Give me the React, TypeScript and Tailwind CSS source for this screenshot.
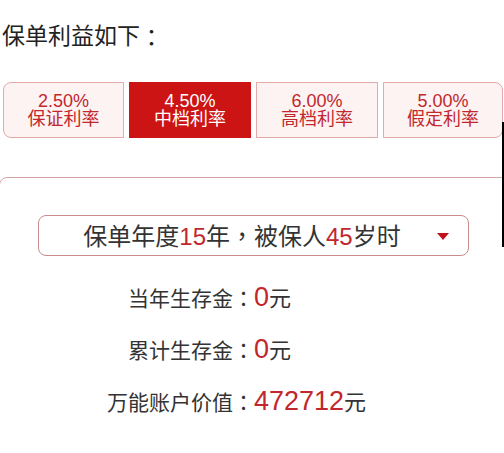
import React from "react";

const tabs = [
  { rate: "2.50%", label: "保证利率", active: false, w: "w-[121px]", round: "rounded-l-[8px]" },
  { rate: "4.50%", label: "中档利率", active: true, w: "w-[122px]", round: "" },
  { rate: "6.00%", label: "高档利率", active: false, w: "w-[122px]", round: "" },
  { rate: "5.00%", label: "假定利率", active: false, w: "w-[120px]", round: "rounded-r-[8px]" },
];

const rows = [
  { label: "当年生存金", value: "0" },
  { label: "累计生存金", value: "0" },
  { label: "万能账户价值", value: "472712" },
];

function Colon() {
  return <span className="font-['Noto_Sans_CJK_TC',sans-serif]">：</span>;
}

export default function App() {
  return (
    <div className="relative w-[504px] h-[453px] overflow-hidden bg-white text-[#222] font-['Liberation_Sans','Noto_Sans_CJK_SC',sans-serif]">
      <div className="pt-[21px] pl-[2px]">
        <div className="h-[30px] flex items-center text-[23px] leading-[30px]">
          保单利益如下<Colon />
        </div>
      </div>

      <div className="mt-[31px] ml-[3px] flex gap-[5px]">
        {tabs.map((t) => (
          <div
            key={t.rate}
            className={
              t.active
                ? `${t.w} h-[56px] flex flex-col items-center justify-center bg-[#cc1414] border border-[#cc1414] text-white text-[18px] leading-[18px]`
                : `${t.w} ${t.round} h-[56px] flex flex-col items-center justify-center bg-[#fdf3f2] border border-[#e2aaa8] text-[#c1272d] text-[18px] leading-[18px]`
            }
          >
            <span>{t.rate}</span>
            <span>{t.label}</span>
          </div>
        ))}
      </div>

      <div className="mt-[39px] -ml-[1px] w-[540px] h-[320px] border border-[#d9a3a3] rounded-[8px]">
        <div className="pt-[37px]">
          <div className="relative ml-[38px] w-[431px] h-[41px] border border-[#c98b8b] rounded-[8px] flex items-center justify-center pr-[23px] text-[24px] text-[#333]">
            <span>
              保单年度<span className="text-[#c1272d]">15</span>年
              <span className="font-['Noto_Sans_CJK_TC',sans-serif]">，</span>被保人
              <span className="text-[#c1272d]">45</span>岁时
            </span>
            <svg className="absolute right-[19px] top-[17px]" width="12" height="7" viewBox="0 0 12 7">
              <polygon points="0,0 12,0 6,7" fill="#c1121a" />
            </svg>
          </div>

          <div className="mt-[15px]">
            {rows.map((r) => (
              <div key={r.label} className="h-[52px] flex items-center">
                <div className="flex items-baseline">
                  <span className="w-[254px] text-right text-[21px] text-[#333]">
                    {r.label}
                    <Colon />
                  </span>
                  <span className="text-[27px] text-[#c1272d]">{r.value}</span>
                  <span className="text-[22px] text-[#333]">元</span>
                </div>
              </div>
            ))}
          </div>
        </div>
      </div>

      <div className="absolute right-0 top-[122px] w-[2px] h-[125px] bg-black" />
    </div>
  );
}
